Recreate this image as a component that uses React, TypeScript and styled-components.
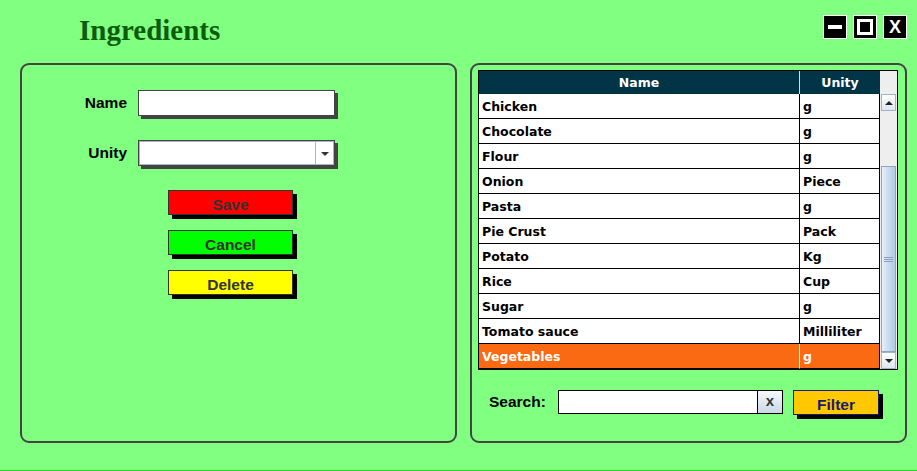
import React from "react";
import styled, { createGlobalStyle } from "styled-components";

const GlobalStyle = createGlobalStyle`
  html, body { margin: 0; padding: 0; background: #80ff80; }
  body { font-family: "Liberation Sans", Arial, sans-serif; }
  * { box-sizing: border-box; }
`;

const Page = styled.div`
  width: 917px;
  height: 471px;
  background: #80ff80;
  border-bottom: 1px solid #22dd22;
  padding: 0 10px 0 20px;
  display: flex;
  flex-direction: column;
`;

const TopBar = styled.div`
  height: 63px;
  display: flex;
  align-items: flex-start;
`;

const Title = styled.h1`
  margin: 0 0 0 59px;
  padding-top: 14px;
  font-family: "Liberation Serif", "Times New Roman", serif;
  font-weight: bold;
  font-size: 29px;
  line-height: 32px;
  color: #0c5c0c;
`;

const WindowControls = styled.div`
  margin-left: auto;
  margin-top: 15px;
  display: flex;
  gap: 6px;
`;

const WinButton = styled.div`
  width: 24px;
  height: 24px;
  background: #000;
  border: 1px solid #fff;
  display: flex;
  align-items: center;
  justify-content: center;
  color: #fff;
  font: bold 18px/1 "Liberation Sans", Arial, sans-serif;
`;

const MinBar = styled.span`
  width: 14px;
  height: 4px;
  background: #fff;
`;

const MaxBox = styled.span`
  width: 16px;
  height: 16px;
  border: 3px solid #fff;
`;

const Panels = styled.div`
  display: flex;
  gap: 13px;
  height: 380px;
`;

const Panel = styled.section`
  width: 437px;
  height: 380px;
  border: 2px solid #444;
  border-radius: 9px;
  display: flex;
  flex-direction: column;
`;

const LeftPanel = styled(Panel)`
  padding-top: 25px;
`;

const RightPanel = styled(Panel)`
  padding: 5px 0 0 6px;
`;

const FormGrid = styled.div`
  display: grid;
  grid-template-columns: 105px 197px;
  grid-auto-rows: 26px;
  column-gap: 11px;
  row-gap: 24px;
  align-items: center;
`;

const Label = styled.label`
  text-align: right;
  font-weight: bold;
  font-size: 15.5px;
  color: #000;
`;

const TextInput = styled.input`
  width: 197px;
  height: 26px;
  border: 1px solid #444;
  background: #fff;
  box-shadow: 3px 3px 0 #444;
  outline: none;
  padding: 0 4px;
`;

const Combo = styled.div`
  width: 197px;
  height: 26px;
  border: 1px solid #444;
  box-shadow: 3px 3px 0 #444;
  display: flex;
  background: #fff;
`;

const ComboField = styled.div`
  flex: 1;
  border: 1px solid #a3b6cb;
  border-right: none;
  background: #fff;
`;

const ComboArrow = styled.div`
  width: 19px;
  border: 1px solid #a3b6cb;
  background: #fff;
  display: flex;
  align-items: center;
  justify-content: center;
  &::after {
    content: "";
    border-left: 4px solid transparent;
    border-right: 4px solid transparent;
    border-top: 4px solid #333;
    margin-top: 1px;
  }
`;

const ButtonColumn = styled.div`
  margin: 24px 0 0 146px;
  display: flex;
  flex-direction: column;
  gap: 15px;
  width: 125px;
`;

const ActionButton = styled.button<{ $bg: string }>`
  width: 125px;
  height: 25px;
  border: 1px solid #333;
  background: ${(p) => p.$bg};
  box-shadow: 4px 4px 0 #000;
  color: #333;
  font-family: "Liberation Sans", Arial, sans-serif;
  font-weight: bold;
  font-size: 15.5px;
  line-height: 20px;
  padding: 4px 0 0;
  text-align: center;
  cursor: pointer;
`;

const ScrollPane = styled.div`
  width: 420px;
  height: 300px;
  border: 1px solid #000;
  display: flex;
  background: #fff;
`;

const TableArea = styled.div`
  width: 401px;
  display: flex;
  flex-direction: column;
`;

const cellFont = `
  font-family: "DejaVu Sans", Verdana, Tahoma, sans-serif;
  font-weight: bold;
  font-size: 12.5px;
`;

const HeaderRow = styled.div`
  display: grid;
  grid-template-columns: 321px 80px;
  height: 23px;
  background: #013447;
`;

const HeaderCell = styled.div`
  ${cellFont}
  color: #fff;
  text-align: center;
  line-height: 22px;
  padding-top: 1px;
  border-right: 1px solid #d8d8d8;
  &:last-child {
    border-right: none;
  }
`;

const Row = styled.div<{ $selected?: boolean }>`
  display: grid;
  grid-template-columns: 321px 80px;
  height: 25px;
  background: ${(p) => (p.$selected ? "#f96a12" : "#fff")};
  color: ${(p) => (p.$selected ? "#fff" : "#000")};
`;

const Cell = styled.div<{ $selected?: boolean }>`
  ${cellFont}
  border-bottom: 1px solid #000;
  border-right: 1px solid #000;
  padding: 3px 0 0 3px;
  line-height: 20px;
  white-space: nowrap;
  overflow: hidden;
  &:first-child {
    border-right-color: ${(p) => (p.$selected ? "#fff" : "#000")};
  }
`;

const ScrollBar = styled.div`
  width: 17px;
  background: #eeeeee;
  display: flex;
  flex-direction: column;
`;

const Corner = styled.div`
  height: 23px;
  background: #eeeeee;
`;

const ScrollButton = styled.div<{ $down?: boolean }>`
  height: 17px;
  margin: 0 1px;
  border: 1px solid #9fb3c9;
  background: linear-gradient(#ffffff, #dde6ef);
  display: flex;
  align-items: center;
  justify-content: center;
  &::after {
    content: "";
    border-left: 4px solid transparent;
    border-right: 4px solid transparent;
    ${(p) =>
      p.$down ? "border-top: 4px solid #222;" : "border-bottom: 4px solid #222;"}
  }
`;

const Track = styled.div`
  flex: 1;
  display: flex;
  flex-direction: column;
  justify-content: flex-end;
`;

const Thumb = styled.div`
  height: 186px;
  margin: 0 1px;
  border: 1px solid #8ea4bf;
  background: linear-gradient(to right, #e8f0f9, #cddff2 40%, #b3cae3);
  display: flex;
  flex-direction: column;
  align-items: center;
  justify-content: center;
  gap: 1px;
`;

const Grip = styled.span`
  width: 9px;
  height: 1px;
  background: #8aa0bc;
`;

const SearchRow = styled.div`
  margin: 20px 0 0 11px;
  display: flex;
  align-items: flex-start;
`;

const SearchLabel = styled.span`
  width: 69px;
  height: 24px;
  font-weight: bold;
  font-size: 15.5px;
  line-height: 24px;
  color: #000;
`;

const SearchInput = styled.input`
  width: 200px;
  height: 24px;
  border: 1px solid #000;
  background: #fff;
  outline: none;
`;

const ClearButton = styled.button`
  width: 26px;
  height: 24px;
  margin-left: -1px;
  border: 1px solid #000;
  background: linear-gradient(#f6f9fc, #c9d7e6);
  color: #333;
  font-family: "Liberation Sans", Arial, sans-serif;
  font-weight: bold;
  font-size: 15px;
  line-height: 20px;
  padding: 0 0 2px;
`;

const FilterButton = styled.button`
  margin-left: 10px;
  width: 86px;
  height: 25px;
  border: 1px solid #1a1a70;
  background: #ffc800;
  box-shadow: 4px 4px 0 #000;
  color: #1a1a70;
  font-family: "Liberation Sans", Arial, sans-serif;
  font-weight: bold;
  font-size: 15.5px;
  line-height: 20px;
  padding: 4px 0 0;
`;

const rows: [string, string][] = [
  ["Chicken", "g"],
  ["Chocolate", "g"],
  ["Flour", "g"],
  ["Onion", "Piece"],
  ["Pasta", "g"],
  ["Pie Crust", "Pack"],
  ["Potato", "Kg"],
  ["Rice", "Cup"],
  ["Sugar", "g"],
  ["Tomato sauce", "Milliliter"],
  ["Vegetables", "g"],
];

export default function App() {
  const selected = 10;
  return (
    <Page>
      <GlobalStyle />
      <TopBar>
        <Title>Ingredients</Title>
        <WindowControls>
          <WinButton>
            <MinBar />
          </WinButton>
          <WinButton>
            <MaxBox />
          </WinButton>
          <WinButton>X</WinButton>
        </WindowControls>
      </TopBar>
      <Panels>
        <LeftPanel>
          <FormGrid>
            <Label>Name</Label>
            <TextInput />
            <Label>Unity</Label>
            <Combo>
              <ComboField />
              <ComboArrow />
            </Combo>
          </FormGrid>
          <ButtonColumn>
            <ActionButton $bg="#ff0000">Save</ActionButton>
            <ActionButton $bg="#00ff00">Cancel</ActionButton>
            <ActionButton $bg="#ffff00">Delete</ActionButton>
          </ButtonColumn>
        </LeftPanel>
        <RightPanel>
          <ScrollPane>
            <TableArea>
              <HeaderRow>
                <HeaderCell>Name</HeaderCell>
                <HeaderCell>Unity</HeaderCell>
              </HeaderRow>
              {rows.map(([name, unit], i) => (
                <Row key={name} $selected={i === selected}>
                  <Cell $selected={i === selected}>{name}</Cell>
                  <Cell $selected={i === selected}>{unit}</Cell>
                </Row>
              ))}
            </TableArea>
            <ScrollBar>
              <Corner />
              <ScrollButton />
              <Track>
                <Thumb>
                  <Grip />
                  <Grip />
                  <Grip />
                </Thumb>
              </Track>
              <ScrollButton $down />
            </ScrollBar>
          </ScrollPane>
          <SearchRow>
            <SearchLabel>Search:</SearchLabel>
            <SearchInput />
            <ClearButton>x</ClearButton>
            <FilterButton>Filter</FilterButton>
          </SearchRow>
        </RightPanel>
      </Panels>
    </Page>
  );
}
